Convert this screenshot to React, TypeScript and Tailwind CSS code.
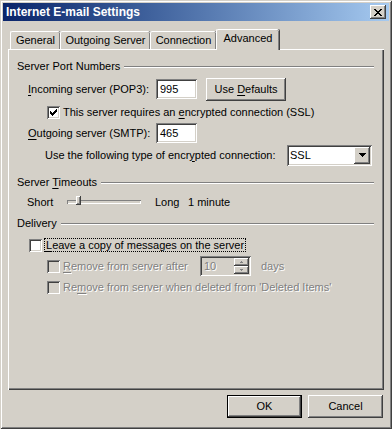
import React from "react"

const raised = "shadow-[inset_-1px_-1px_#404040,inset_1px_1px_#ffffff,inset_-2px_-2px_#808080,inset_2px_2px_#d4d0c8]"
const sunken = "shadow-[inset_1px_1px_#808080,inset_-1px_-1px_#ffffff,inset_2px_2px_#404040,inset_-2px_-2px_#d4d0c8]"
const disabledText = "text-[#808080] [text-shadow:1px_1px_0_#ffffff]"

function U({ children }: { children: React.ReactNode }) {
    return <span className="underline underline-offset-[2px]">{children}</span>
}

function Checkbox({ checked = false, disabled = false }: { checked?: boolean; disabled?: boolean }) {
    return (
        <div className={`w-[13px] h-[13px] shrink-0 flex items-center justify-center ${sunken} ${disabled ? "bg-[#d4d0c8]" : "bg-white"}`}>
            {checked && (
                <svg width="7" height="7" viewBox="0 0 7 7" shapeRendering="crispEdges">
                    <path d="M0 2h1v3h-1z M1 3h1v3h-1z M2 4h1v3h-1z M3 3h1v3h-1z M4 2h1v3h-1z M5 1h1v3h-1z M6 0h1v3h-1z" fill="#000" />
                </svg>
            )}
        </div>
    )
}

function GroupHeader({ children }: { children: React.ReactNode }) {
    return (
        <div className="flex items-center h-[14px] mr-[10px]">
            <span className="pr-[4px]">{children}</span>
            <div className="flex-1 h-[2px] border-t border-t-[#808080] border-b border-b-white mt-[1px]" />
        </div>
    )
}

function TextBox({ value, width }: { value: string; width: string }) {
    return (
        <div className={`${width} h-[20px] bg-white ${sunken} flex items-center pl-[4px]`}>
            {value}
        </div>
    )
}

function Tab({ label, width, selected = false }: { label: string; width: string; selected?: boolean }) {
    if (selected) {
        return (
            <div className={`${width} h-[21px] -mb-[1px] relative z-10 bg-[#d4d0c8] rounded-t-[2px] border-t border-l border-white shadow-[inset_-1px_0_#808080,1px_0_#404040] flex items-start justify-center pt-[2px]`}>
                {label}
            </div>
        )
    }
    return (
        <div className={`${width} h-[18px] bg-[#d4d0c8] rounded-t-[2px] border-t border-l border-white shadow-[inset_-1px_0_#808080,1px_0_#404040] flex items-center justify-center`}>
            {label}
        </div>
    )
}

function Button({ label, isDefault = false, width }: { label: React.ReactNode; isDefault?: boolean; width: string }) {
    return (
        <div className={`${width} h-[23px] flex items-center justify-center bg-[#d4d0c8] ${isDefault ? "outline outline-1 outline-black -outline-offset-1 shadow-[inset_-2px_-2px_#404040,inset_2px_2px_#ffffff,inset_-3px_-3px_#808080]" : raised}`}>
            {label}
        </div>
    )
}

export default function App() {
    return (
        <div
            className="w-[392px] h-[429px] bg-[#d4d0c8] text-[11px] leading-[13px] text-black shadow-[inset_1px_1px_#d4d0c8,inset_-1px_-1px_#404040,inset_2px_2px_#ffffff,inset_-2px_-2px_#808080] pt-[3px]"
            style={{ fontFamily: '"Liberation Sans", Arial, sans-serif' }}
        >
            {/* 타이틀바 */}
            <div className="mx-[3px] h-[18px] bg-gradient-to-r from-[#0a246a] to-[#a6caf0] flex items-center justify-between pl-[3px] pr-[3px]">
                <span className="text-white font-bold text-[12px]">Internet E-mail Settings</span>
                <div className={`w-[16px] h-[14px] bg-[#d4d0c8] ${raised} flex items-center justify-center`}>
                    <svg width="8" height="7" viewBox="0 0 8 7" shapeRendering="crispEdges">
                        <path d="M0 0h2v1h-2z M6 0h2v1h-2z M1 1h2v1h-2z M5 1h2v1h-2z M2 2h4v1h-4z M3 3h2v1h-2z M2 4h4v1h-4z M1 5h2v1h-2z M5 5h2v1h-2z M0 6h2v1h-2z M6 6h2v1h-2z" fill="#000" />
                    </svg>
                </div>
            </div>

            {/* 탭 */}
            <div className="mt-[8px] h-[20px] pl-[10px] flex items-end">
                <Tab label="General" width="w-[50px]" />
                <Tab label="Outgoing Server" width="w-[90px]" />
                <Tab label="Connection" width="w-[66px]" />
                <Tab label="Advanced" width="w-[63px]" selected />
            </div>

            {/* 탭 패널 */}
            <div className="ml-[8px] w-[376px] h-[341px] shadow-[inset_1px_1px_#ffffff,inset_-1px_-1px_#404040,inset_-2px_-2px_#808080] pl-[9px] pt-[10px]">
                <GroupHeader>Server Port Numbers</GroupHeader>

                <div className="mt-[5px] h-[22px] flex items-center pl-[11px]">
                    <span className="w-[128px]"><U>I</U>ncoming server (POP3):</span>
                    <TextBox value="995" width="w-[41px]" />
                    <div className="ml-[9px]">
                        <Button width="w-[80px]" label={<span>Use <U>D</U>efaults</span>} />
                    </div>
                </div>

                <div className="mt-[6px] h-[13px] flex items-center pl-[30px]">
                    <Checkbox checked />
                    <span className="ml-[3px]">This server requires an <U>e</U>ncrypted connection (SSL)</span>
                </div>

                <div className="mt-[3px] h-[22px] flex items-center pl-[11px]">
                    <span className="w-[128px]"><U>O</U>utgoing server (SMTP):</span>
                    <TextBox value="465" width="w-[41px]" />
                </div>

                <div className="h-[22px] flex items-center pl-[28px]">
                    <span className="w-[242px]">Use the following type of encr<U>y</U>pted connection:</span>
                    <div className={`w-[85px] h-[21px] bg-white ${sunken} flex items-center justify-between pl-[3px] pr-[2px]`}>
                        <span>SSL</span>
                        <div className={`w-[16px] h-[17px] bg-[#d4d0c8] ${raised} flex items-center justify-center`}>
                            <svg width="7" height="4" viewBox="0 0 7 4" shapeRendering="crispEdges">
                                <path d="M0 0h7v1h-7z M1 1h5v1h-5z M2 2h3v1h-3z M3 3h1v1h-1z" fill="#000" />
                            </svg>
                        </div>
                    </div>
                </div>

                <div className="mt-[9px]">
                    <GroupHeader>Server <U>T</U>imeouts</GroupHeader>
                </div>

                <div className="mt-[6px] h-[14px] flex items-center pl-[10px]">
                    <span className="w-[40px]">Short</span>
                    <div className="relative w-[74px] h-[4px] shadow-[inset_1px_1px_#808080,inset_-1px_-1px_#ffffff]">
                        <div className={`absolute left-[9px] -top-[4px] w-[5px] h-[9px] bg-[#d4d0c8] ${raised}`} />
                    </div>
                    <span className="ml-[14px] w-[33px]">Long</span>
                    <span>1 minute</span>
                </div>

                <div className="mt-[7px]">
                    <GroupHeader>Delivery</GroupHeader>
                </div>

                <div className="mt-[8px] h-[14px] flex items-center pl-[12px]">
                    <Checkbox />
                    <span className="ml-[2px] px-[1px] border border-dotted border-black leading-[12px]"><U>L</U>eave a copy of messages on the server</span>
                </div>

                <div className="mt-[4px] h-[20px] flex items-center pl-[30px]">
                    <Checkbox disabled />
                    <span className={`ml-[3px] w-[137px] ${disabledText}`}><U>R</U>emove from server after</span>
                    <div className={`w-[51px] h-[20px] bg-[#d4d0c8] ${sunken} flex items-center justify-between pl-[4px] pr-[2px]`}>
                        <span className={disabledText}>10</span>
                        <div className="flex flex-col">
                            <div className={`w-[15px] h-[8px] ${raised} flex items-center justify-center`}>
                                <svg width="3" height="2" viewBox="0 0 3 2" shapeRendering="crispEdges"><path d="M1 0h1v1h-1z M0 1h3v1h-3z" fill="#808080" /></svg>
                            </div>
                            <div className={`w-[15px] h-[8px] ${raised} flex items-center justify-center`}>
                                <svg width="3" height="2" viewBox="0 0 3 2" shapeRendering="crispEdges"><path d="M0 0h3v1h-3z M1 1h1v1h-1z" fill="#808080" /></svg>
                            </div>
                        </div>
                    </div>
                    <span className={`ml-[10px] ${disabledText}`}>days</span>
                </div>

                <div className="mt-[4px] h-[14px] flex items-center pl-[30px]">
                    <Checkbox disabled />
                    <span className={`ml-[3px] ${disabledText}`}>Re<U>m</U>ove from server when deleted from 'Deleted Items'</span>
                </div>
            </div>

            {/* 하단 버튼 */}
            <div className="mt-[5px] flex justify-end gap-[6px] pr-[9px]">
                <Button width="w-[75px]" label="OK" isDefault />
                <Button width="w-[75px]" label="Cancel" />
            </div>
        </div>
    )
}
